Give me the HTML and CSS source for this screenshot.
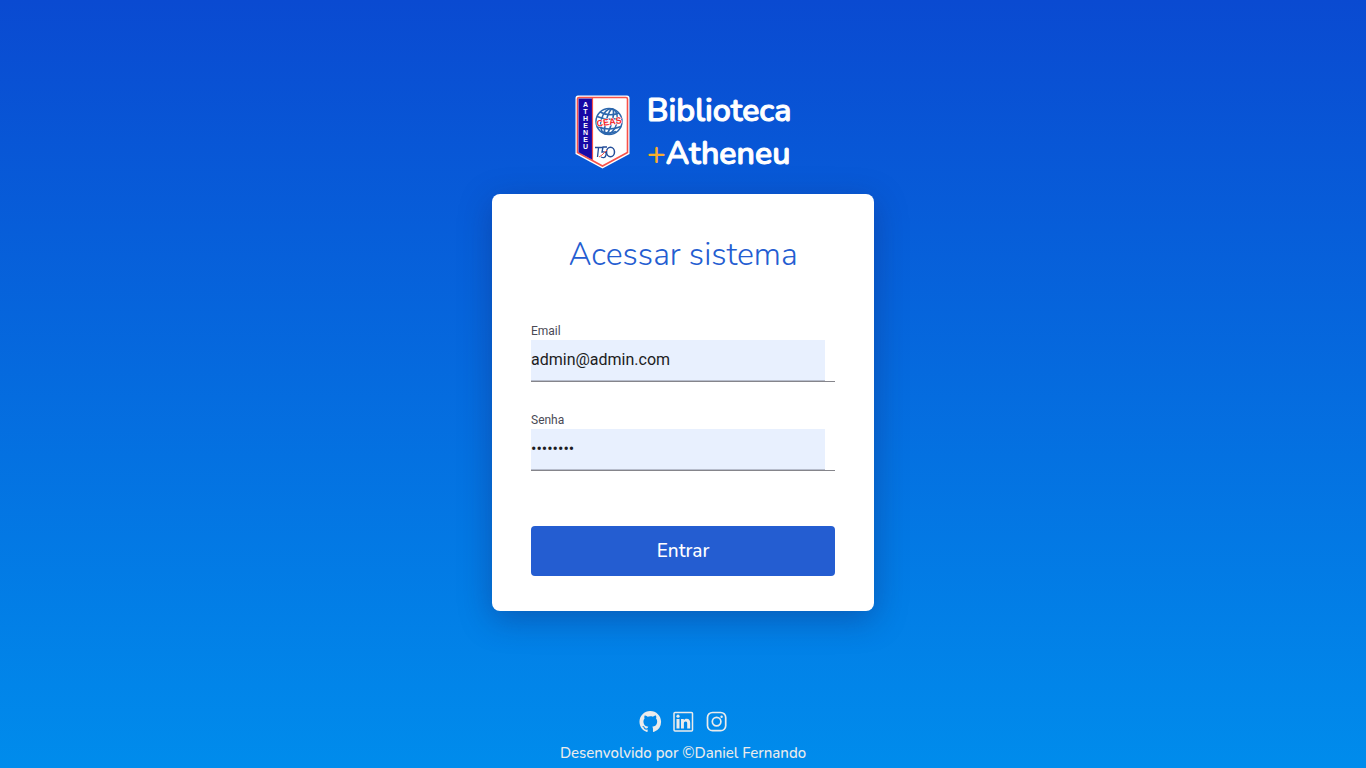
FILE: index.html
```html
<!DOCTYPE html>
<html lang="pt-BR">
<head>
<meta charset="utf-8">
<meta name="viewport" content="width=device-width, initial-scale=1">
<title>Biblioteca +Atheneu</title>
<link rel="stylesheet" href="styles.css">
</head>
<body>
<div class="page">
  <main class="login">
    <header class="brand">
      <svg class="brand-logo" viewBox="0 0 56 74" aria-hidden="true">
        <path d="M3 .5h49q2.500 0 2.500 2.500v56L27.500 73.500.5 59V3Q.5.500 3 .5z" fill="#fff"/>
        <path d="M4 2.500h47q1.500 0 1.500 1.500v53.500L27.500 71 2.500 57.500V4q0-1.500 1.500-1.500z" fill="#fff" stroke="#f8524a" stroke-width="1.600"/>
        <path d="M3.500 3.500H17v61L3.500 57.300z" fill="#1809a6"/>
        <path d="M17.500 3v62" stroke="#f8524a" stroke-width="1.200"/>
        <g class="logo-letters">
          <text x="10.500" y="12">A</text><text x="10.500" y="19">T</text><text x="10.500" y="26">H</text><text x="10.500" y="33">E</text><text x="10.500" y="40">N</text><text x="10.500" y="47">E</text><text x="10.500" y="54">U</text>
        </g>
        <g fill="none" stroke="#2c67ad" stroke-width="1.500">
          <circle cx="34" cy="26.500" r="13"/>
          <ellipse cx="34" cy="26.500" rx="8" ry="13" transform="rotate(15 34 26.500)"/>
          <ellipse cx="34" cy="26.500" rx="3" ry="13" transform="rotate(15 34 26.500)"/>
          <path d="M25 17q9 5 19 1M22 21.500q12 5 24 1M22 31.500q12 5 24 0M26 36.500q8 3 15 0"/>
        </g>
        <text class="logo-name" x="34" y="30" transform="rotate(-8 34 26.500)">CEAS</text>
        <path d="M20 52.500h8M23.500 53l-1 9M32 52h-4l-1 5q5-1 4 3t-5 2" fill="none" stroke="#244e99" stroke-width="1.300"/>
        <ellipse cx="35.500" cy="57" rx="4" ry="4.800" fill="none" stroke="#244e99" stroke-width="1.500"/>
        <path d="M24 62l3-2 5-5" fill="none" stroke="#f8524a"/>
      </svg>
      <h1 class="brand-name">Biblioteca<br><span class="brand-plus">+</span>Atheneu</h1>
    </header>
    <form class="card">
      <h2 class="card-title">Acessar sistema</h2>
      <div class="field">
        <label class="field-label" for="email">Email</label>
        <div class="field-line"><input class="field-input" id="email" type="email" value="admin@admin.com"></div>
      </div>
      <div class="field">
        <label class="field-label" for="senha">Senha</label>
        <div class="field-line"><input class="field-input" id="senha" type="password" value="12345678"></div>
      </div>
      <button class="submit" type="submit">Entrar</button>
    </form>
  </main>
  <footer class="footer">
    <nav class="social" aria-label="Redes sociais">
      <a href="#" aria-label="GitHub"><svg class="icon" viewBox="0 0 24 24"><path fill="currentColor" transform="translate(1 .5) scale(.94)" d="M12 .5C5.650.500.500 5.650.500 12c0 5.100 3.300 9.400 7.900 10.900.580.100.790-.250.790-.560v-2c-3.200.700-3.880-1.370-3.880-1.370-.530-1.330-1.280-1.690-1.280-1.690-1.050-.710.080-.700.080-.700 1.150.080 1.760 1.190 1.760 1.190 1.030 1.760 2.690 1.250 3.350.960.100-.750.400-1.250.730-1.540-2.550-.290-5.240-1.280-5.240-5.690 0-1.260.450-2.280 1.190-3.090-.120-.290-.520-1.460.110-3.040 0 0 .970-.310 3.160 1.180A11 11 0 0 1 12 6.170c.980 0 1.960.130 2.880.390 2.200-1.490 3.160-1.180 3.160-1.180.630 1.580.230 2.750.110 3.040.740.810 1.190 1.830 1.190 3.090 0 4.420-2.700 5.390-5.260 5.680.410.360.780 1.060.780 2.130v3.020c0 .310.210.670.800.560A11.500 11.500 0 0 0 23.500 12C23.500 5.650 18.350.500 12 .5z"/></svg></a>
      <a href="#" aria-label="LinkedIn"><svg class="icon" viewBox="0 0 24 24"><rect x="3" y="2.500" width="18.500" height="18.500" rx="1" fill="none" stroke="currentColor" stroke-width="1.500"/><path fill="currentColor" d="M5.500 9h3v9.500h-3zM10 9h2.800v1.200c.500-.900 1.400-1.500 2.800-1.500 2.700 0 3.600 1.700 3.600 4.300v5.500h-3v-4.800c0-1.400-.300-2.300-1.500-2.300-1.400 0-1.800.900-1.800 2.300v4.800H10z"/><circle cx="7" cy="6.200" r="1.600" fill="currentColor"/></svg></a>
      <a href="#" aria-label="Instagram"><svg class="icon" viewBox="0 0 24 24" fill="none" stroke="currentColor" stroke-width="1.700"><rect x="3.500" y="2.500" width="18.200" height="18.200" rx="5"/><circle cx="12.600" cy="11.600" r="4.300"/><circle cx="17.600" cy="6.700" r="1.200" fill="currentColor" stroke="none"/></svg></a>
    </nav>
    <p class="credit">Desenvolvido por ©Daniel Fernando</p>
  </footer>
</div>
</body>
</html>
```
FILE: styles.css
```css
* { box-sizing: border-box; }
body { margin: 0; font-family: Nunito, Lato, "Open Sans", sans-serif; }
.page {
  min-height: 100vh;
  display: flex;
  flex-direction: column;
  align-items: center;
  justify-content: space-between;
  gap: 24px;
  padding: 89px 16px 4px;
  background: linear-gradient(180deg, #0a4ad1, #008cec);
}
.login {
  width: 100%;
  max-width: 382px;
  display: flex;
  flex-direction: column;
  align-items: center;
  gap: 19px;
}
.brand { display: flex; align-items: center; gap: 16px; }
.brand-logo { width: 56px; height: 74px; }
.logo-letters { font: bold 7px "Liberation Sans", sans-serif; fill: #fff; text-anchor: middle; }
.logo-name { font: bold 9px "Liberation Sans", sans-serif; fill: #f3262c; stroke: #fff; stroke-width: 1px; paint-order: stroke; text-anchor: middle; }
.brand-name { margin: 0; color: #fff; font-size: 32px; line-height: 43px; font-weight: 600; -webkit-text-stroke: 1px currentColor; }
.brand-plus { color: #f9ae2d; -webkit-text-stroke: 0; }
.card {
  width: 100%;
  display: flex;
  flex-direction: column;
  padding: 39px 39px 35px;
  border-radius: 8px;
  background: #fff;
  box-shadow: 0 8px 32px rgba(20, 40, 110, .4);
}
.card-title { margin: 0 0 47px; color: #245dd1; font-size: 32px; line-height: 44px; font-weight: 350; text-align: center; }
.field { margin-bottom: 31px; font-family: Roboto, sans-serif; }
.field-label { display: block; color: #4a4a55; font-size: 12px; line-height: 14px; padding-bottom: 2px; }
.field-line { display: flex; padding-right: 10px; border-bottom: 1px solid #85858b; }
.field-input {
  flex: 1;
  min-width: 0;
  height: 41px;
  padding: 0 0 2px;
  border: 0;
  border-bottom: 1px solid #b7bdcc;
  background: #e8f0fe;
  color: #1c1c22;
  font: 16px Roboto, sans-serif;
}
.submit {
  height: 50px;
  margin-top: 24px;
  border: 0;
  border-radius: 4px;
  background: #245dd1;
  color: #fff;
  font: 500 19px Nunito, Lato, sans-serif;
}
.footer { display: flex; flex-direction: column; align-items: center; gap: 8px; color: #ebebeb; }
.social { display: flex; gap: 9px; }
.social a { display: block; color: inherit; }
.icon { display: block; width: 24px; height: 24px; }
.credit { margin: 0; font-size: 15px; line-height: 22px; font-weight: 500; }
```
